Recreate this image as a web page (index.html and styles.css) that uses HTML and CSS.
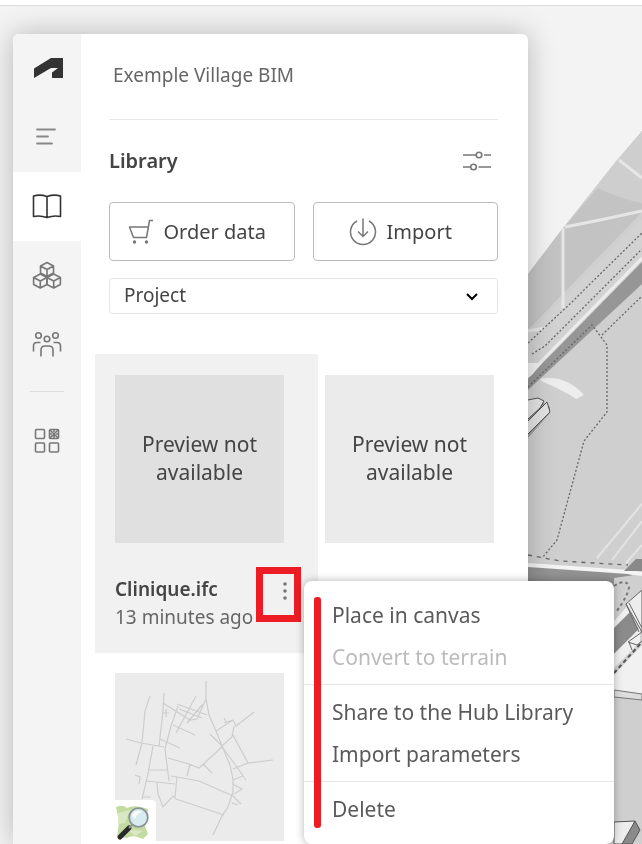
FILE: index.html
```
<!DOCTYPE html>
<html lang="en">
<head>
<meta charset="UTF-8">
<meta name="viewport" content="width=device-width, initial-scale=1.0">
<title>Exemple Village BIM</title>
<link rel="stylesheet" href="styles.css">
</head>
<body>

<!-- 3D canvas behind the panel -->
<svg class="scene" viewBox="0 0 642 844" preserveAspectRatio="xMaxYMin slice" aria-hidden="true">
    <path d="M642 131L616 161L563 228L528 274V844H642z" fill="#cfcfcf"/>
    <path d="M642 131L598 188L563 228L528 274V330L642 212z" fill="#c3c3c3"/>
    <path d="M642 131L598 188Q620 199 642 203z" fill="#cecece"/>
    <path d="M528 334L642 219V262L528 380z" fill="#d2d2d2"/>
    <path d="M619 160L642 178M565 227L600 220L642 211M563 228V308M528 331L545 328" stroke="#e6e6e6" stroke-width="3" fill="none"/>
    <path d="M528 375L642 258" stroke="#ececec" stroke-width="3"/>
    <path d="M528 378L642 262V284L528 390z" fill="#969696"/>
    <path d="M528 363H542L532 375L528 378z" fill="#f2f2f2"/>
    <path d="M540 379Q565 374 584 395L576 399Q563 390 543 382z" fill="#ededed"/>
    <g fill="none" stroke="#666" stroke-width="1.3" stroke-dasharray="2 2">
        <path d="M528 343L572 302L590 284L642 233"/>
        <path d="M532 354L545 346L642 249"/>
        <path d="M528 387L592 325L607 345V412L584 441L557 540L542 558"/>
        <path d="M602 335L642 296"/>
        <path d="M528 555L560 561L628 565" stroke-dasharray="4 5"/>
    </g>
    <path d="M528 400H539L550 407V413L528 438z" fill="#999"/>
    <path d="M528 400L538 398L544 401L540 408L528 419M528 421L547 402L550 412L528 434" fill="#e4e4e4" stroke="#555"/>
    <path d="M597 558L642 504M612 560L642 521M626 563L642 545" stroke="#e3e3e3" stroke-width="2"/>
    <path d="M528 565L622 571L642 580V594L610 600L528 582z" fill="#929292"/>
    <path d="M614 578L642 574V690H614z" fill="#cfcfcf"/>
    <path d="M528 565L628 572L642 574" fill="none" stroke="#f4f4f4" stroke-width="4"/>
    <path d="M614 621L642 590V606L614 635z" fill="#f0f0f0"/>
    <path d="M624 571L636 559H642V571z" fill="#898989"/>
    <path d="M614 628L630 612L638 630L614 654z" fill="#8b8b8b"/>
    <path d="M614 654L640 628V642L614 668z" fill="#efefef"/>
    <path d="M614 675L642 645V694L614 690z" fill="#f1f1f1"/>
    <path d="M626 604L642 590V632z" fill="#ededed" stroke="#666"/>
    <path d="M626 604L639 632M629 603L642 628M628 642L642 632M628 642L637 645L642 641M629 642L632 650" stroke="#666" fill="none"/>
    <path d="M614 586Q627 578 629 587Q628 596 616 612" fill="none" stroke="#777" stroke-width="2" stroke-dasharray="3 3"/>
    <path d="M614 673L642 642" fill="none" stroke="#555" stroke-width="2" stroke-dasharray="4 3"/>
    <path d="M614 690L642 694V700L614 697z" fill="#ddd" stroke="#777"/>
    <path d="M614 822L635 821L627 844H614z" fill="#ededed" stroke="#555"/>
    <path d="M635 821L640 830L632 844H622z" fill="#8a8a8a" stroke="#555"/>
</svg>

<div class="topbar"></div>

<main class="panel">
    <nav class="rail" aria-label="Main">
        <a class="rail-item" href="#" aria-label="Home">
            <svg width="32" height="24" viewBox="0 0 32 24"><path d="M3 11.500L20 1H32V21H21V15.500L27 11H20L3 21z" fill="#333"/></svg>
        </a>
        <a class="rail-item" href="#" aria-label="Outline">
            <svg width="32" height="32" viewBox="0 0 32 32"><path d="M6 7.500H24M6 14.500H17M6 21.500H21" stroke="#888" stroke-width="1.800" stroke-linecap="round"/></svg>
        </a>
        <a class="rail-item active" href="#" aria-label="Library">
            <svg width="32" height="32" viewBox="0 0 32 32"><path d="M16 5.500Q9 3 2.500 5V25.500Q9 24 16 26.500Q23 24 29.500 25.500V5Q23 3 16 5.500V26.500" fill="none" stroke="#333" stroke-width="1.600" stroke-linejoin="round"/></svg>
        </a>
        <a class="rail-item" href="#" aria-label="Objects">
            <svg width="32" height="32" viewBox="0 0 32 32">
                <g fill="none" stroke="#777" stroke-width="1.600" stroke-linejoin="round">
                    <path d="M16 2.500L22.500 6V13L16 16.500L9.500 13V6zM9.500 6L16 9.500L22.500 6M16 9.500V16.500"/>
                    <path d="M9.300 14L16 17.500V24.500L9.300 28L2.600 24.500V17.500zM2.600 17.500L9.300 21L16 17.500M9.300 21V28"/>
                    <path d="M22.700 14L29.400 17.500V24.500L22.700 28L16 24.500V17.500zM16 17.500L22.700 21L29.400 17.500M22.700 21V28"/>
                </g>
            </svg>
        </a>
        <a class="rail-item" href="#" aria-label="Team">
            <svg width="32" height="32" viewBox="0 0 32 32">
                <g fill="none" stroke="#777" stroke-width="1.600">
                    <circle cx="7.500" cy="6.500" r="2.800"/>
                    <circle cx="24.500" cy="6.500" r="2.800"/>
                    <circle cx="16" cy="10" r="2.800"/>
                    <path d="M10 27.500V21Q10 17 14 17H18Q22 17 22 21V27.500M2.500 22.500V17Q2.500 13.500 6 13.500H9.500M29.500 22.500V17Q29.500 13.500 26 13.500H22.500"/>
                </g>
            </svg>
        </a>
        <hr class="rail-line">
        <a class="rail-item" href="#" aria-label="Extensions">
            <svg width="32" height="32" viewBox="0 0 32 32">
                <g fill="none" stroke="#777" stroke-width="1.600">
                    <rect x="4.500" y="4.500" width="9" height="9" rx="1"/>
                    <rect x="18.500" y="4.500" width="9" height="9" rx="1"/>
                    <rect x="4.500" y="18" width="9" height="9" rx="1"/>
                    <rect x="18.500" y="18" width="9" height="9" rx="1"/>
                    <path d="M19 5L27 13M27 5L19 13M23 5V7M23 11V13M19 9H21M25 9H27"/>
                </g>
            </svg>
        </a>
    </nav>

    <section class="content">
        <header class="project">Exemple Village BIM</header>

        <div class="heading">
            <h1>Library</h1>
            <button class="icon-button" aria-label="Filter">
                <svg width="30" height="24" viewBox="0 0 30 24"><g fill="none" stroke="#777" stroke-width="1.600"><path d="M1 6H14M22 6H29M1 18H8.500M16.500 18H29"/><circle cx="17" cy="6" r="2.800"/><circle cx="11.500" cy="18" r="2.800"/></g></svg>
            </button>
        </div>

        <div class="actions">
            <button class="button">
                <svg width="26" height="28" viewBox="0 0 26 28"><path d="M25 2.500H21.500L18.500 19.500H5.500L1.500 9H20" fill="none" stroke="#777" stroke-width="1.500" stroke-linejoin="round"/><circle cx="6.500" cy="24" r="1.700" fill="#777"/><circle cx="18.500" cy="24" r="1.700" fill="#777"/></svg>
                Order data
            </button>
            <button class="button">
                <svg width="28" height="30" viewBox="0 0 28 30"><path d="M8 4A12.500 12.500 0 1 0 20 4M14 1.500V19.500M9 14.500L14 19.500L19 14.500" fill="none" stroke="#777" stroke-width="1.500"/></svg>
                Import
            </button>
        </div>

        <div class="select-wrap">
            <select class="select" aria-label="Source">
                <option>Project</option>
            </select>
            <svg class="chevron" width="12" height="8" viewBox="0 0 12 8"><path d="M1 1L6 6L11 1" fill="none" stroke="#000" stroke-width="2"/></svg>
        </div>

        <div class="cards">
            <article class="card selected">
                <div class="preview">Preview not available</div>
                <div class="card-info">
                    <h2>Clinique.ifc</h2>
                    <p>13 minutes ago</p>
                    <button class="more" aria-label="More options">
                        <svg width="6" height="20" viewBox="0 0 6 20" fill="#777"><circle cx="3" cy="3" r="1.800"/><circle cx="3" cy="10" r="1.800"/><circle cx="3" cy="17" r="1.800"/></svg>
                    </button>
                    <div class="menu">
                        <div class="menu-mark"></div>
                        <button>Place in canvas</button>
                        <button disabled>Convert to terrain</button>
                        <hr>
                        <button>Share to the Hub Library</button>
                        <button>Import parameters</button>
                        <hr>
                        <button>Delete</button>
                    </div>
                </div>
            </article>

            <article class="card">
                <div class="preview">Preview not available</div>
                <div class="card-info">
                    <h2>Clinique.ifc</h2>
                </div>
            </article>

            <article class="card">
                <div class="preview map">
                    <svg class="roads" viewBox="0 0 169 168" aria-hidden="true">
                        <g fill="none" stroke="#cdcdcd" stroke-width="1.200">
                            <path d="M91 8V26L94 42L101 58L107 73L115 92L118 106V119L113 134L107 143L98 162"/>
                            <path d="M91 26L82 46L75 47L48 30M62 31L92 42M64 36L87 45M81 23L61 60M88 31L72 50M49 20L48 38L44 73M63 33L56 53L50 76L54 108M48 40H54M51 36V44"/>
                            <path d="M35 23L30 38L27 70L21 92M11 66L26 70L49 74M45 66L65 75M58 52L80 62M38 73L33 101L27 126M33 97H52M31 108L60 111M56 103L84 108L118 123L126 131"/>
                            <path d="M53 85L74 91L84 95L107 74L119 90L131 107M75 91L72 103M88 91L97 100M95 61L107 73M101 58L118 47L121 53L139 39M118 47L109 50M107 73L117 64L119 53M118 62L133 90L158 87M133 90L118 96M109 45L111 49"/>
                            <path d="M42 110L43 121L48 134L58 123L61 126L109 142M62 104L60 124M118 107L128 103M118 111L127 116L119 121M117 130L123 132M20 102L25 104L24 111M28 124H36"/>
                        </g>
                    </svg>
                    <svg class="osm" width="41" height="41" viewBox="0 0 41 41" aria-hidden="true">
                        <path d="M0 0H37Q41 0 41 4V41H0z" fill="#fff"/>
                        <path d="M1 7Q8 4 12 8Q20 4 33 9L32 20L30 26L33 34L28 39Q18 34 12 38L2 37L4 22z" fill="#c3dba0"/>
                        <path d="M3 13L15 10L10 23L3 24M12 29L28 31L20 36z" fill="#d9e8c2"/>
                        <path d="M5 37L14 28" stroke="#292929" stroke-width="5" stroke-linecap="round"/>
                        <path d="M14 28L18 24" stroke="#999" stroke-width="2"/>
                        <circle cx="23.500" cy="17.500" r="9.300" fill="#d8ecef" stroke="#8b9297" stroke-width="1.800"/>
                        <path d="M17 15Q20 9 27 12Q22 13 20 19z" fill="#fff"/>
                    </svg>
                </div>
            </article>
        </div>
    </section>
</main>

</body>
</html>
```
FILE: styles.css
```
* {
    box-sizing: border-box;
}

body {
    margin: 0;
    height: 100vh;
    display: flex;
    flex-direction: column;
    overflow: hidden;
    background-color: #f3f3f3;
    color: #444;
    font-family: "Noto Sans", sans-serif;
    font-size: 21px;
    line-height: 28px;
}

button,
select {
    font: inherit;
    color: inherit;
    cursor: pointer;
}

h1, h2, p {
    margin: 0;
    font-size: 20px;
}

h1, h2 {
    font-weight: 600;
}

svg {
    flex: none;
}

.scene {
    position: fixed;
    top: 0;
    left: 0;
    width: 100%;
    height: 100%;
}

.topbar {
    position: relative;
    flex: none;
    height: 6px;
    background-color: #fff;
    border-bottom: 1px solid #dcdcdc;
}

.panel {
    position: relative;
    flex: 1;
    min-height: 0;
    display: flex;
    margin: 28px 114px 0 13px;
    background-color: #fff;
    border-radius: 6px 6px 0 0;
    box-shadow: 0 0 28px rgba(0, 0, 0, 0.25);
}

/* Left icon rail */
.rail {
    flex: none;
    width: 68px;
    background-color: #f4f4f4;
    border-radius: 6px 0 0 0;
}

.rail-item {
    display: flex;
    align-items: center;
    justify-content: center;
    height: 69px;
}

.rail-item.active {
    background-color: #fff;
}

.rail-line {
    width: 34px;
    margin: 12px auto 14px;
    border: 0;
    border-top: 1px solid #dcdcdc;
}

/* Panel content */
.content {
    flex: 1;
    min-width: 0;
    padding: 0 30px 0 28px;
}

.project {
    height: 86px;
    padding: 27px 4px 0;
    border-bottom: 1px solid #e8e8e8;
    color: #666;
    font-size: 19px;
}

.heading {
    display: flex;
    align-items: center;
    justify-content: space-between;
    height: 82px;
    padding-right: 6px;
}

.icon-button {
    display: flex;
    padding: 0;
    border: 0;
    background: none;
}

.actions {
    display: grid;
    grid-template-columns: 1fr 1fr;
    gap: 18px;
}

.button {
    display: flex;
    align-items: center;
    justify-content: center;
    gap: 10px;
    height: 59px;
    padding: 0 10px 0 0;
    background-color: #fff;
    border: 1px solid #bcbcbc;
    border-radius: 4px;
    font-size: 20px;
}

.select-wrap {
    position: relative;
    margin-top: 17px;
}

.select {
    display: block;
    width: 100%;
    height: 36px;
    padding: 0 14px 2px;
    appearance: none;
    background-color: #fff;
    border: 1px solid #e6e6e6;
    border-radius: 3px;
    font-size: 19px;
}

.chevron {
    position: absolute;
    top: 15px;
    right: 20px;
    pointer-events: none;
}

/* Library cards */
.cards {
    display: grid;
    grid-template-columns: 1fr 1fr;
    gap: 20px 41px;
    padding: 61px 4px 0 6px;
}

.card.selected {
    margin: -21px -34px 0 -20px;
    padding: 21px 34px 0 20px;
    background-color: #f1f1f1;
}

.preview {
    display: flex;
    align-items: center;
    justify-content: center;
    aspect-ratio: 169 / 168;
    padding: 0 16px 2px;
    background-color: #ebebeb;
    text-align: center;
}

.selected .preview {
    background-color: #e0e0e0;
}

.card-info {
    position: relative;
    height: 110px;
    padding-top: 32px;
    white-space: nowrap;
}

.card-info h2,
.card-info p {
    font-size: 19px;
}

.card-info p {
    color: #666;
}

.more {
    position: absolute;
    top: 24px;
    right: -17px;
    width: 45px;
    height: 55px;
    display: flex;
    align-items: flex-start;
    justify-content: flex-end;
    padding: 7px 6px;
    background: none;
    border: 7px solid #ed1c24;
}

.menu {
    position: absolute;
    z-index: 1;
    top: 38px;
    left: calc(100% + 20px);
    width: 310px;
    padding: 13px 0 14px;
    background-color: #fff;
    border-radius: 8px;
    box-shadow: 0 0 8px rgba(0, 0, 0, 0.3);
}

.menu button {
    display: block;
    width: 100%;
    height: 42px;
    padding: 0 28px;
    border: 0;
    background: none;
    color: #5a5a5a;
    text-align: left;
}

.menu button:disabled {
    color: #bbb;
}

.menu hr {
    margin: 6px 0;
    border: 0;
    border-top: 1px solid #e6e6e6;
}

.menu-mark {
    position: absolute;
    top: 16px;
    bottom: 16px;
    left: 10px;
    width: 7px;
    background-color: #ed1c24;
    border-radius: 3px;
}

.preview.map {
    position: relative;
    padding: 0;
}

.roads {
    width: 100%;
}

.osm {
    position: absolute;
    left: 0;
    bottom: 0;
}
```
